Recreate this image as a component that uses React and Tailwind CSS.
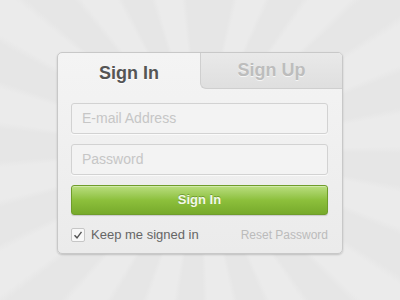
export default function App() {
  return (
    <div
      className="w-[400px] h-[300px] flex items-start justify-center pt-[52px] bg-[repeating-conic-gradient(from_3deg_at_200px_150px,#e6e6e6_0deg_9deg,#ebebeb_11deg_20deg,#e6e6e6_22deg)]"
      style={{ fontFamily: '"Liberation Sans", Arial, sans-serif' }}
    >
      <div className="w-[286px] h-[202px] rounded-[5px] border border-[#c8c8c8] bg-gradient-to-b from-[#f4f4f4] to-[#ebebeb] shadow-[0_1px_2px_rgba(0,0,0,0.18)] flex flex-col overflow-hidden">
        <div className="flex h-[36px] shrink-0">
          <div className="w-[142px] flex items-center justify-center pt-[4px] text-[18px] font-bold text-[#555] [text-shadow:0_1px_0_#fff]">
            Sign In
          </div>
          <div className="flex-1 flex items-center justify-center border-l border-b border-[#cfcfcf] rounded-bl-[6px] bg-gradient-to-b from-[#e9e9e9] to-[#dfdfdf] text-[18px] font-bold text-[#bdbdbd] [text-shadow:0_1px_0_#f5f5f5]">
            Sign Up
          </div>
        </div>
        <div className="flex flex-col pl-[13px] pr-[14px] pt-[14px]">
          <div className="h-[31px] rounded-[3px] border border-[#d2d2d2] bg-[#f3f3f3] shadow-[0_1px_0_#fafafa] flex items-center pl-[10px] text-[14px] text-[#c6c6c6]">
            E-mail Address
          </div>
          <div className="h-[31px] mt-[10px] rounded-[3px] border border-[#d2d2d2] bg-[#f3f3f3] shadow-[0_1px_0_#fafafa] flex items-center pl-[10px] text-[14px] text-[#c6c6c6]">
            Password
          </div>
          <div className="h-[30px] mt-[10px] rounded-[3px] border border-[#6f9d2b] bg-gradient-to-b from-[#bade7e] via-[#8dc03c] to-[#77aa2b] shadow-[inset_0_1px_0_rgba(255,255,255,0.35),0_1px_1px_rgba(0,0,0,0.15)] flex items-center justify-center text-[13px] font-bold text-[#f3f8ea] [text-shadow:0_-1px_0_rgba(70,110,20,0.5)]">
            Sign In
          </div>
          <div className="flex items-center justify-between mt-[10px]">
            <div className="flex items-center gap-[6px]">
              <div className="w-[14px] h-[14px] rounded-[2px] border border-[#c6c6c6] bg-[#f8f8f8] flex items-center justify-center">
                <svg width="10" height="10" viewBox="0 0 10 10">
                  <path d="M1.5 5.2 L4 7.8 L8.5 1.8" fill="none" stroke="#555" strokeWidth="1.4" />
                </svg>
              </div>
              <span className="text-[13px] text-[#666]">Keep me signed in</span>
            </div>
            <span className="text-[12px] text-[#bbb]">Reset Password</span>
          </div>
        </div>
      </div>
    </div>
  );
}
